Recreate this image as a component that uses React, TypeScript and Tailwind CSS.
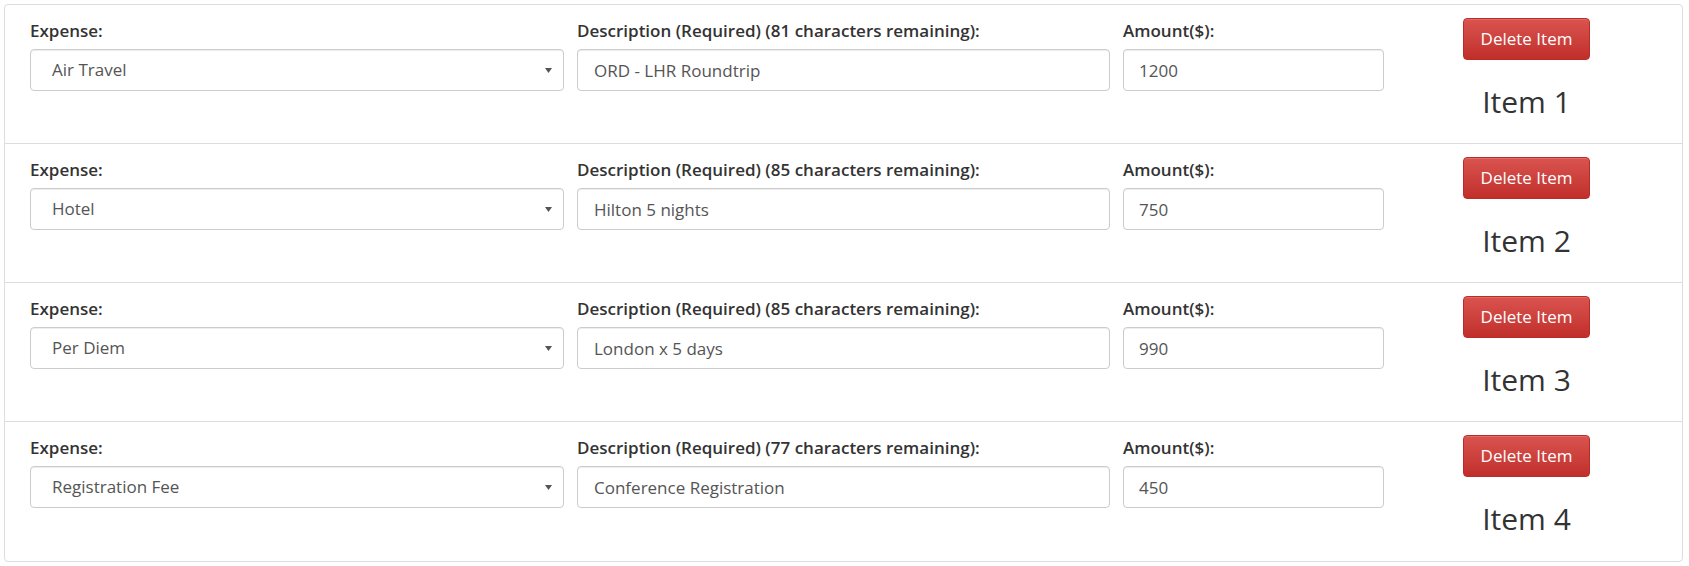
import React from "react";

type Item = {
  expense: string;
  remaining: number;
  description: string;
  amount: string;
};

const ITEMS: Item[] = [
  { expense: "Air Travel", remaining: 81, description: "ORD - LHR Roundtrip", amount: "1200" },
  { expense: "Hotel", remaining: 85, description: "Hilton 5 nights", amount: "750" },
  { expense: "Per Diem", remaining: 85, description: "London x 5 days", amount: "990" },
  { expense: "Registration Fee", remaining: 77, description: "Conference Registration", amount: "450" },
];

const fieldCls =
  "h-[42px] w-full rounded-[4px] border border-[#cccccc] bg-white text-[17px] text-[#555555] shadow-[inset_0_1px_1px_rgba(0,0,0,0.075)] outline-none";

const labelCls = "mb-[8px] block h-[20px] text-[17px] font-semibold leading-[20px] text-[#333333]";

const ItemRow = ({ item, index, last }: { item: Item; index: number; last: boolean }) => {
  return (
    <div
      className={`flex h-[139px] items-start gap-[13px] pl-[25px] pr-[26px] pt-[16px] ${
        last ? "" : "border-b border-[#dddddd]"
      }`}
    >
      <div className="w-[534px] shrink-0">
        <label className={labelCls}>Expense:</label>
        <div className={`${fieldCls} flex items-center justify-between pl-[21px] pr-[11px]`}>
          <span>{item.expense}</span>
          <svg width="7" height="5" viewBox="0 0 7 5" className="text-[#555555]">
            <path d="M0 0 H7 L3.5 5 Z" fill="currentColor" />
          </svg>
        </div>
      </div>
      <div className="w-[533px] shrink-0">
        <label className={labelCls}>
          Description (Required) ({item.remaining} characters remaining):
        </label>
        <input className={`${fieldCls} px-[16px]`} defaultValue={item.description} readOnly />
      </div>
      <div className="w-[261px] shrink-0">
        <label className={labelCls}>Amount($):</label>
        <input className={`${fieldCls} px-[15px]`} defaultValue={item.amount} readOnly />
      </div>
      <div className="flex flex-1 flex-col items-center -mt-[3px]">
        <button className="h-[42px] w-[127px] rounded-[4px] border border-[#b92c28] bg-gradient-to-b from-[#d9534f] to-[#c12e2a] text-[17px] text-white shadow-[inset_0_1px_0_rgba(255,255,255,0.15)]">
          Delete Item
        </button>
        <h2 className="mt-[25px] text-[30px] leading-[33px] text-[#333333]">Item {index + 1}</h2>
      </div>
    </div>
  );
};

export default function App() {
  return (
    <div className="min-h-[566px] bg-white pl-1 pr-[6px] pt-1" style={{ fontFamily: '"Open Sans", "Liberation Sans", sans-serif' }}>
      <div className="rounded-[4px] border border-[#dddddd] bg-white">
        {ITEMS.map((item, i) => (
          <ItemRow key={i} item={item} index={i} last={i === ITEMS.length - 1} />
        ))}
      </div>
    </div>
  );
}
